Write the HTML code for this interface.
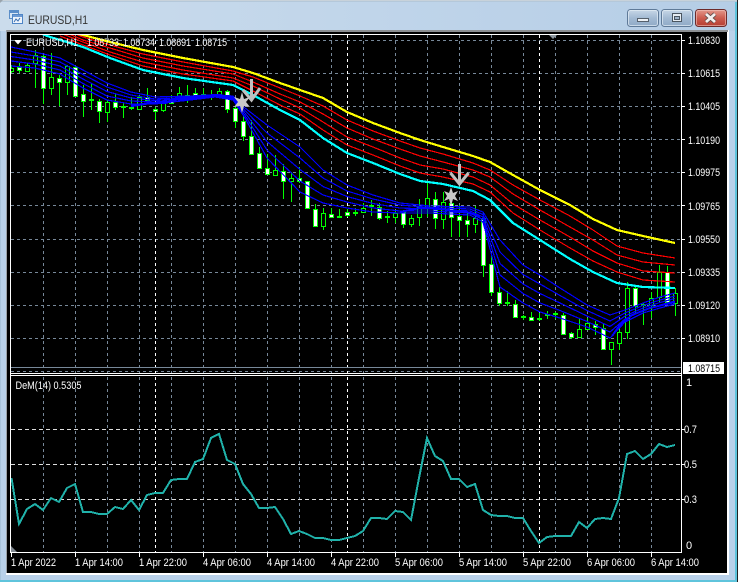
<!DOCTYPE html>
<html><head><meta charset="utf-8"><title>EURUSD,H1</title>
<style>
html,body{margin:0;padding:0;background:#b9d1ea}
body{width:739px;height:582px;overflow:hidden;position:relative}
svg{position:absolute;left:0;top:0;display:block}
text{font-family:"Liberation Sans",sans-serif;fill:#fff;font-size:11px}
polyline{shape-rendering:crispEdges}
</style></head><body>
<svg width="739" height="582" viewBox="0 0 739 582" xmlns="http://www.w3.org/2000/svg">
<defs>
<linearGradient id="tb" x1="0" y1="0" x2="1" y2="0"><stop offset="0" stop-color="#cbdcec"/><stop offset=".5" stop-color="#c0d5ea"/><stop offset="1" stop-color="#b5cde6"/></linearGradient>
<linearGradient id="bb" x1="0" y1="0" x2="0" y2="1"><stop offset="0" stop-color="#c9d8e8"/><stop offset=".5" stop-color="#a3bad3"/><stop offset="1" stop-color="#8ea9c6"/></linearGradient>
<linearGradient id="br" x1="0" y1="0" x2="0" y2="1"><stop offset="0" stop-color="#e49a8e"/><stop offset=".5" stop-color="#cc5c4f"/><stop offset="1" stop-color="#b43c30"/></linearGradient>
<clipPath id="m"><rect x="11" y="35" width="670" height="338"/></clipPath>
<clipPath id="s"><rect x="11" y="377" width="670" height="175"/></clipPath>
</defs>

<!-- window frame -->
<rect width="739" height="582" fill="#b9d1ea"/>
<rect x="0" y="0" width="737" height="31" fill="url(#tb)"/>
<rect x="0" y="0" width="737" height="1" fill="#c8d2da"/>
<rect x="0" y="1" width="737" height="1" fill="#b4c8da"/>
<rect x="0" y="31" width="1" height="551" fill="#a9c4dc"/>
<rect x="735" y="2" width="2" height="580" fill="#5fc4dc"/>
<rect x="737" y="0" width="1" height="582" fill="#222"/>
<rect x="738" y="0" width="1" height="582" fill="#fff"/>
<rect x="0" y="580" width="737" height="2" fill="#5fc4dc"/>
<path d="M0 0h3l-3 3z" fill="#9aa4ac"/>

<!-- title icon -->
<rect x="9.5" y="10.5" width="9" height="8" fill="#d8e6f5" stroke="#5b8ec9"/>
<rect x="12.5" y="14.5" width="10" height="9" fill="#eef4fb" stroke="#4f86c6"/>
<rect x="10" y="11" width="8" height="2" fill="#5b8ec9"/>
<rect x="13" y="15" width="9" height="2" fill="#6d9ad3"/>
<path d="M14 22l2-3 2 2 2-3" fill="none" stroke="#3a6fb0"/>
<text x="28" y="24" textLength="60" lengthAdjust="spacingAndGlyphs" style="fill:#333;font-size:12px">EURUSD,H1</text>

<!-- caption buttons -->
<rect x="627.5" y="9.5" width="31" height="17" rx="3" fill="url(#bb)" stroke="#5f7a98"/>
<rect x="628.5" y="10.5" width="29" height="15" rx="2" fill="none" stroke="#e3ecf5" stroke-opacity=".7"/>
<rect x="637.5" y="18.5" width="11" height="3" fill="#eef2f6" stroke="#56606c"/>
<rect x="661.5" y="9.5" width="31" height="17" rx="3" fill="url(#bb)" stroke="#5f7a98"/>
<rect x="662.5" y="10.5" width="29" height="15" rx="2" fill="none" stroke="#e3ecf5" stroke-opacity=".7"/>
<rect x="672.5" y="13.5" width="9" height="8" fill="#e6ecf2" stroke="#4a5560"/>
<rect x="674.5" y="16.5" width="5" height="3" fill="#9fb3c9" stroke="#4a5560"/>
<rect x="695.5" y="9.5" width="31" height="17" rx="3" fill="url(#br)" stroke="#6d2a2a"/>
<rect x="696.5" y="10.5" width="29" height="15" rx="2" fill="none" stroke="#f2c4bc" stroke-opacity=".6"/>
<path d="M706 14l9 8M715 14l-9 8" stroke="#5c4a48" stroke-width="4.4"/>
<path d="M706 14l9 8M715 14l-9 8" stroke="#f3efee" stroke-width="2.8"/>

<!-- client area -->
<rect x="6" y="30" width="723" height="545" fill="#fff"/>
<rect x="6" y="30" width="722" height="2" fill="#8c8f92"/>
<rect x="6" y="30" width="1" height="543" fill="#9aa0a6"/>
<rect x="7" y="32" width="720" height="541" fill="#000"/>

<!-- grids main -->
<g fill="none" stroke="#778899" stroke-dasharray="3 3" shape-rendering="crispEdges">
<path d="M11 40.5H681M11 73.5H681M11 106.5H681M11 139.5H681M11 172.5H681M11 205.5H681M11 239.5H681M11 272.5H681M11 305.5H681M11 338.5H681M11 371.5H681"/>
<path d="M43.5 35V373M75.5 35V373M107.5 35V373M139.5 35V373M171.5 35V373M203.5 35V373M235.5 35V373M267.5 35V373M299.5 35V373M331.5 35V373M363.5 35V373M395.5 35V373M427.5 35V373M459.5 35V373M491.5 35V373M523.5 35V373M555.5 35V373M587.5 35V373M619.5 35V373M651.5 35V373"/>
<path d="M43.5 377V552M75.5 377V552M107.5 377V552M139.5 377V552M171.5 377V552M203.5 377V552M235.5 377V552M267.5 377V552M299.5 377V552M331.5 377V552M363.5 377V552M395.5 377V552M427.5 377V552M459.5 377V552M491.5 377V552M523.5 377V552M555.5 377V552M587.5 377V552M619.5 377V552M651.5 377V552"/>
</g>
<g fill="none" stroke="#ddd" stroke-dasharray="4 3" shape-rendering="crispEdges">
<path d="M11 429.5H681M11 464.5H681M11 499.5H681"/>
</g>
<g fill="none" stroke="#fff" stroke-dasharray="3 3" shape-rendering="crispEdges">
<path d="M155.5 35V373M347.5 35V373M539.5 35V373M155.5 377V552M347.5 377V552M539.5 377V552"/>
</g>
<path d="M11 367.5H681" stroke="#778899" shape-rendering="crispEdges"/>

<g clip-path="url(#m)">
<!-- candles -->
<g shape-rendering="crispEdges" stroke="#00ff00" fill="none">
<path d="M11.5 65V73M19.5 63V73M27.5 63V72M35.5 50V88M43.5 55V104M51.5 53V95M59.5 75V106M67.5 65V95M75.5 66V97M83.5 85V117M91.5 83V110M99.5 99V123M107.5 100V122M115.5 94V110M123.5 103V118M131.5 97V110M139.5 95V110M147.5 88V103M155.5 107V120M163.5 100V112M171.5 95V104M179.5 87V102M187.5 85V103M195.5 88V98M203.5 88V97M211.5 90V100M219.5 88V98M227.5 90V113M235.5 106V128M243.5 115V141M251.5 120V155M259.5 147V169M267.5 154V175M275.5 155V176M283.5 164V199M291.5 172V202M299.5 167V183M307.5 181V208M315.5 204V227M323.5 208V230M331.5 208V218M339.5 209V218M347.5 209V217M355.5 208V216M363.5 203V213M371.5 200V216M379.5 203V220M387.5 211V223M395.5 211V223M403.5 210V228M411.5 215V227M419.5 199V226M427.5 183V217M435.5 192V229M443.5 192V229M451.5 200V237M459.5 205V237M467.5 212V237M475.5 206V233M483.5 212V277M491.5 256V296M499.5 287V306M507.5 291V306M515.5 300V318M523.5 315V320M531.5 312V321M539.5 313V321M547.5 311V319M555.5 312V319M563.5 313V335M571.5 332V339M579.5 318V337M587.5 318V330M595.5 321V335M603.5 323V350M611.5 342V365M619.5 323V350M627.5 282V339M635.5 285V313M643.5 303V325M651.5 292V318M659.5 265V302M667.5 266V303M675.5 288V316"/>
<path stroke-width="2" d="M89 100h5M121 107h5M129 108h5M185 96h5M209 97h5M337 217h5M353 213h5M369 206h5M385 217h5M505 303h5M521 317h5M537 319h5M545 315h5M553 314h5M641 305h5"/>
<path fill="#fff" d="M17.5 67.5h4V70.5h-4zM41.5 56.5h4V88.5h-4zM57.5 78.5h4V82.5h-4zM73.5 67.5h4V96.5h-4zM81.5 94.5h4V101.5h-4zM97.5 101.5h4V111.5h-4zM113.5 102.5h4V107.5h-4zM145.5 97.5h4V100.5h-4zM153.5 109.5h4V111.5h-4zM169.5 100.5h4V103.5h-4zM193.5 93.5h4V95.5h-4zM201.5 94.5h4V97.5h-4zM225.5 91.5h4V109.5h-4zM233.5 108.5h4V121.5h-4zM241.5 121.5h4V136.5h-4zM249.5 136.5h4V154.5h-4zM257.5 153.5h4V168.5h-4zM265.5 168.5h4V174.5h-4zM281.5 171.5h4V181.5h-4zM297.5 178.5h4V181.5h-4zM305.5 181.5h4V208.5h-4zM313.5 209.5h4V226.5h-4zM329.5 214.5h4V217.5h-4zM345.5 212.5h4V215.5h-4zM377.5 207.5h4V218.5h-4zM401.5 212.5h4V224.5h-4zM433.5 199.5h4V218.5h-4zM449.5 203.5h4V217.5h-4zM457.5 216.5h4V220.5h-4zM465.5 220.5h4V224.5h-4zM481.5 218.5h4V265.5h-4zM489.5 264.5h4V292.5h-4zM497.5 292.5h4V303.5h-4zM513.5 304.5h4V317.5h-4zM529.5 317.5h4V320.5h-4zM561.5 315.5h4V334.5h-4zM569.5 333.5h4V337.5h-4zM593.5 324.5h4V327.5h-4zM601.5 328.5h4V349.5h-4zM633.5 288.5h4V306.5h-4zM665.5 272.5h4V302.5h-4z"/>
<path fill="#000" d="M9.5 68.5h4V71.5h-4zM25.5 65.5h4V71.5h-4zM33.5 55.5h4V63.5h-4zM49.5 77.5h4V88.5h-4zM65.5 66.5h4V82.5h-4zM105.5 102.5h4V112.5h-4zM137.5 97.5h4V109.5h-4zM161.5 103.5h4V110.5h-4zM177.5 93.5h4V98.5h-4zM217.5 91.5h4V95.5h-4zM273.5 170.5h4V175.5h-4zM289.5 178.5h4V181.5h-4zM321.5 213.5h4V226.5h-4zM361.5 208.5h4V212.5h-4zM393.5 213.5h4V217.5h-4zM409.5 218.5h4V224.5h-4zM417.5 207.5h4V217.5h-4zM425.5 198.5h4V207.5h-4zM441.5 202.5h4V219.5h-4zM473.5 218.5h4V224.5h-4zM577.5 329.5h4V337.5h-4zM585.5 323.5h4V329.5h-4zM609.5 342.5h4V349.5h-4zM617.5 332.5h4V343.5h-4zM625.5 288.5h4V332.5h-4zM649.5 298.5h4V305.5h-4zM657.5 272.5h4V297.5h-4zM673.5 293.5h4V303.5h-4z"/>
</g>
<!-- blue fan -->
<g fill="none" stroke="#0000ff" stroke-width="1.2">
<polyline points="11,47 35,52 60,58 83,70 107,83 131,92 155,97 190,96 215,95 233,96 245,108 267,125 300,147 323,170 347,185 373,195 400,203 430,206 470,207 483,212 500,240 523,265 540,275 560,288 587,305 610,315 625,310 643,303 660,297 675,293"/>
<polyline points="11,52 35,56 60,62 83,74.5 107,87 131,95 155,99 190,97 215,95.5 233,97 245,110.5 267,133 300,158 323,178 347,191 373,199 400,205 430,207.5 470,209 483,214.5 500,252 523,274.5 540,284 560,295.5 587,310.5 610,321 625,313 643,305.5 660,300 675,296"/>
<polyline points="11,56.5 35,60 60,66 83,79 107,91.5 131,98 155,100.5 190,98 215,96 233,98 245,113 267,141.5 300,169.5 323,186.5 347,196.5 373,203.5 400,208 430,209 470,211 483,217 500,263.5 523,284 540,293.5 560,303 587,316 610,326.5 625,316 643,308 660,302.5 675,298.5"/>
<polyline points="11,61 35,64 60,70 83,83.5 107,96 131,101 155,102 190,99 215,96.5 233,99 245,115.5 267,150 300,181 323,195 347,202 373,208 400,211 430,211 470,213 483,219.5 500,275 523,293.5 540,303 560,310.5 587,321.5 610,332 625,319 643,310.5 660,305 675,301"/>
<polyline points="11,66 35,68 60,74 83,88 107,100 131,104 155,104 190,100 215,97 233,100 245,118 267,158 300,192 323,203 347,208 373,212 400,213 430,213 470,215 483,222 500,287 523,303 540,312 560,318 587,327 610,338 625,322 643,313 660,308 675,304"/>
<polyline stroke-width="2.4" points="131,106 150,103 165,103 180,98 200,96 220,95 233,99"/>
<polyline stroke-width="2" points="400,212 420,208 440,209 470,213 480,217"/>
<polyline stroke-width="2" points="612,336 620,325 632,315 650,308 675,302"/>
</g>
<!-- red fan -->
<g fill="none" stroke="#ff0000" stroke-width="1.2">
<polyline points="60,28 83,37 110,45 143,54 183,62 233,71 253,77 280,88 300,96 323,106 347,120 373,131 400,141 420,148 443,154 473,163 490,170 513,185 540,200 570,216 593,230 617,246 643,253 675,258"/>
<polyline points="60,30 83,40 110,48 143,58 183,66 233,74 253,82 280,94 300,102 323,114 347,128 373,139 400,149 420,156 443,162 473,170 490,177 513,194 540,210 570,227 593,240 617,255 643,262 675,265"/>
<polyline points="60,33 83,42 110,52 143,62 183,70 233,78 253,86 280,99 300,108 323,122 347,137 373,147 400,158 420,165 443,169 473,177 490,185 513,204 540,220 570,237 593,251 617,263 643,271 675,273"/>
<polyline points="60,36 83,45 110,55 143,66 183,74 233,81 253,91 280,105 300,114 323,130 347,145 373,155 400,166 420,173 443,177 473,184 490,192 513,213 540,230 570,248 593,261 617,272 643,280 675,282"/>
</g>
<polyline fill="none" stroke="#ffff00" stroke-width="2.2" points="75,33 83,35 110,42 143,50 183,58 233,67 253,73 280,83 300,90 323,98 347,112 373,123 400,133 420,140 443,147 473,156 490,162 513,175 540,190 570,205 593,219 617,230 643,236 675,243"/>
<polyline fill="none" stroke="#00ffff" stroke-width="2.2" points="40,33 47,36 83,47 110,58 143,70 183,78 233,85 253,95 280,110 300,120 323,138 347,153 373,163 400,174 420,181 443,184 473,191 490,200 513,223 540,240 570,259 593,272 617,283 643,287 675,288"/>
<!-- arrows and stars -->
<g fill="none" stroke="#c0c0c0" stroke-width="3">
<path d="M251.5 79V99M243 90l8.5 10L260 88"/>
<path d="M459.5 164V184M450.5 173l9 11 9-11"/>
</g>
<g fill="#c8c8c8">
<path d="M242 92l2 7 6-2-4 5 4 5-6-1-2 7-2-7-6 1 4-5-4-5 6 2z"/>
<path d="M451 187l2 6 5-2-3 5 3 5-5-2-2 7-2-7-5 2 3-5-3-5 5 2z"/>
</g>
</g>
<path d="M549 35h8l-4 4z" fill="#8e979f"/>

<!-- DeM line -->
<g clip-path="url(#s)">
<polyline fill="none" stroke="#20b2aa" stroke-width="2" points="11.5,478 19,524 27,509 35,504 43,510 51,498 59,502 67,488 75,484 83,512 91,512 99,514 107,514 115,507 123,509 131,500 139,510 147,495 155,493 163,493 171,480 179,479 187,479 195,462 203,459 211,438 219,434 227,460 235,464 243,484 251,494 259,508 267,508 275,507 283,519 291,534 299,531 307,534 315,538 323,538 331,540 339,540 347,538 355,536 363,531 371,518 379,518 387,519 395,511 403,512 411,520 419,478 427,438 435,456 443,461 451,479 459,479 467,487 475,484 483,510 491,515 499,516 507,516 515,518 523,518 531,531 539,543 547,537 555,536 563,536 571,536 579,522 587,528 595,519 603,518 611,519 619,498 627,454 635,451 643,459 651,454 659,444 667,447 675,445"/>
</g>
<path d="M11 546l6 6h-6z" fill="#808890"/>

<!-- frame lines -->
<g stroke="#fff" fill="none" shape-rendering="crispEdges">
<path d="M10.5 34V553M681.5 34V553M10 34.5H682M10 373.5H682M10 375.5H682M10 552.5H682"/>
<path d="M682 40.5h3M682 73.5h3M682 106.5h3M682 139.5h3M682 172.5h3M682 205.5h3M682 239.5h3M682 272.5h3M682 305.5h3M682 338.5h3M682 429.5h3M682 464.5h3M682 499.5h3"/>
<path d="M11.5 553v4M75.5 553v4M139.5 553v4M203.5 553v4M267.5 553v4M331.5 553v4M395.5 553v4M459.5 553v4M523.5 553v4M587.5 553v4M651.5 553v4"/>
</g>

<!-- header -->
<path d="M14 40h8l-4 4.5z" fill="#fff"/>
<text x="26" y="46" textLength="52" lengthAdjust="spacingAndGlyphs">EURUSD,H1</text>
<text x="87" y="46" textLength="32" lengthAdjust="spacingAndGlyphs">1.08733</text>
<text x="123" y="46" textLength="32" lengthAdjust="spacingAndGlyphs">1.08734</text>
<text x="159" y="46" textLength="32" lengthAdjust="spacingAndGlyphs">1.08691</text>
<text x="195" y="46" textLength="32" lengthAdjust="spacingAndGlyphs">1.08715</text>
<text x="15.5" y="389" textLength="66" lengthAdjust="spacingAndGlyphs">DeM(14) 0.5305</text>

<!-- price axis -->
<text x="688" y="44" textLength="32" lengthAdjust="spacingAndGlyphs">1.10830</text>
<text x="688" y="77" textLength="32" lengthAdjust="spacingAndGlyphs">1.10615</text>
<text x="688" y="110" textLength="32" lengthAdjust="spacingAndGlyphs">1.10405</text>
<text x="688" y="144" textLength="32" lengthAdjust="spacingAndGlyphs">1.10190</text>
<text x="688" y="176" textLength="32" lengthAdjust="spacingAndGlyphs">1.09975</text>
<text x="688" y="210" textLength="32" lengthAdjust="spacingAndGlyphs">1.09765</text>
<text x="688" y="243" textLength="32" lengthAdjust="spacingAndGlyphs">1.09550</text>
<text x="688" y="276" textLength="32" lengthAdjust="spacingAndGlyphs">1.09335</text>
<text x="688" y="309" textLength="32" lengthAdjust="spacingAndGlyphs">1.09120</text>
<text x="688" y="342" textLength="32" lengthAdjust="spacingAndGlyphs">1.08910</text>
<rect x="683" y="362" width="41" height="12" fill="#fff"/>
<text x="688" y="372" textLength="32" lengthAdjust="spacingAndGlyphs" style="fill:#000">1.08715</text>
<text x="686" y="386">1</text>
<text x="684" y="433" textLength="13" lengthAdjust="spacingAndGlyphs">0.7</text>
<text x="684" y="468" textLength="13" lengthAdjust="spacingAndGlyphs">0.5</text>
<text x="684" y="503" textLength="13" lengthAdjust="spacingAndGlyphs">0.3</text>
<text x="686" y="549">0</text>

<!-- time axis -->
<text x="11" y="566" textLength="45" lengthAdjust="spacingAndGlyphs">1 Apr 2022</text>
<text x="75" y="566" textLength="48" lengthAdjust="spacingAndGlyphs">1 Apr 14:00</text>
<text x="139" y="566" textLength="48" lengthAdjust="spacingAndGlyphs">1 Apr 22:00</text>
<text x="203" y="566" textLength="48" lengthAdjust="spacingAndGlyphs">4 Apr 06:00</text>
<text x="267" y="566" textLength="48" lengthAdjust="spacingAndGlyphs">4 Apr 14:00</text>
<text x="331" y="566" textLength="48" lengthAdjust="spacingAndGlyphs">4 Apr 22:00</text>
<text x="395" y="566" textLength="48" lengthAdjust="spacingAndGlyphs">5 Apr 06:00</text>
<text x="459" y="566" textLength="48" lengthAdjust="spacingAndGlyphs">5 Apr 14:00</text>
<text x="523" y="566" textLength="48" lengthAdjust="spacingAndGlyphs">5 Apr 22:00</text>
<text x="587" y="566" textLength="48" lengthAdjust="spacingAndGlyphs">6 Apr 06:00</text>
<text x="651" y="566" textLength="48" lengthAdjust="spacingAndGlyphs">6 Apr 14:00</text>
</svg>
</body></html>
